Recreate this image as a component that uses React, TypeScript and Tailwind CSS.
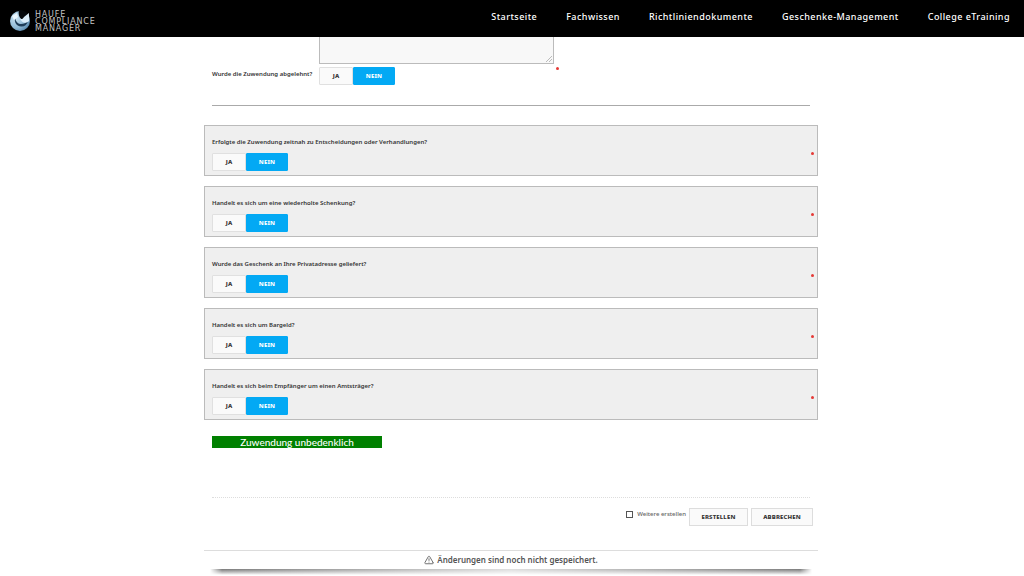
import { useState } from 'react';
import { TriangleAlert } from 'lucide-react';

const NAV_ITEMS = [
  'Startseite',
  'Fachwissen',
  'Richtliniendokumente',
  'Geschenke-Management',
  'College eTraining',
];

const QUESTIONS = [
  { id: 'timing', label: 'Erfolgte die Zuwendung zeitnah zu Entscheidungen oder Verhandlungen?' },
  { id: 'repeated', label: 'Handelt es sich um eine wiederholte Schenkung?' },
  { id: 'address', label: 'Wurde das Geschenk an Ihre Privatadresse geliefert?' },
  { id: 'cash', label: 'Handelt es sich um Bargeld?' },
  { id: 'official', label: 'Handelt es sich beim Empfänger um einen Amtsträger?' },
];

function Logo() {
  return (
    <a href="#" className="flex items-center gap-1 pt-2.5">
      <svg viewBox="0 0 22 22" className="h-[22px] w-[22px]" aria-hidden="true">
        <defs>
          <radialGradient id="globe" cx="0.3" cy="0.35" r="0.8">
            <stop offset="0" stopColor="#c9e2f2" />
            <stop offset="0.6" stopColor="#8fb9d6" />
            <stop offset="1" stopColor="#4f7fa5" />
          </radialGradient>
        </defs>
        <circle cx="11" cy="11" r="10" fill="url(#globe)" />
        <path d="M10 0 C9 4 10 7 12 9 L16 9 L20 5 C18 2 14 0 10 0 Z" fill="#05080c" />
        <path d="M6 8 C7 12 9 14 12 14 C15 14 17 13 19 11 C18 15 15 17 12 16.500 C8 16 5 13 6 8 Z" fill="#1f3d58" />
        <path d="M11 8 C12 10 14 9 15 7 L20 3 C19.500 6 21 8 20 11 C17 14 12 13 11 8 Z" fill="#dceefa" />
        <path d="M3 6 L8 3 L9 7 L5 10 Z" fill="#eaf6fd" />
      </svg>
      <span className="flex flex-col font-['DejaVu_Sans',sans-serif] text-[8px] leading-[7px] font-normal tracking-widest text-[#c4c4c4] uppercase">
        <span>Haufe</span>
        <span>Compliance</span>
        <span>Manager</span>
      </span>
    </a>
  );
}

function YesNoToggle({ label }: { label: string }) {
  const [value, setValue] = useState<'ja' | 'nein'>('nein');
  const base = 'h-[18px] rounded-[1px] border text-[6px] leading-3 font-extrabold tracking-wide';
  const active = 'border-[#03a9f4] bg-[#03a9f4] text-white';
  const inactive = 'border-[#e0e0e0] bg-[#fafafa] text-[#333]';

  return (
    <div role="group" aria-label={label} className="flex">
      <button
        type="button"
        aria-pressed={value === 'ja'}
        onClick={() => setValue('ja')}
        className={`${base} w-[34px] ${value === 'ja' ? active : inactive}`}
      >
        JA
      </button>
      <button
        type="button"
        aria-pressed={value === 'nein'}
        onClick={() => setValue('nein')}
        className={`${base} w-[42px] ${value === 'nein' ? active : inactive}`}
      >
        NEIN
      </button>
    </div>
  );
}

function Required() {
  return <span className="h-[3px] w-[3px] shrink-0 rounded-full bg-[#e53935]" />;
}

export default function App() {
  const [createMore, setCreateMore] = useState(false);

  return (
    <div className="min-h-screen bg-white font-['Noto_Sans',sans-serif] text-[6px] leading-3 font-semibold text-[#333]">
      <header className="fixed inset-x-0 top-0 z-10 flex h-[37px] items-start justify-between bg-black pr-3.5 pl-[9px]">
        <Logo />
        <nav className="flex gap-[29px] pt-[11px] text-[9px] font-medium tracking-wider text-white">
          {NAV_ITEMS.map((item) => (
            <a key={item} href="#">
              {item}
            </a>
          ))}
        </nav>
      </header>

      <main className="pr-0.5">
        <form className="mx-auto max-w-[614px] pt-4" onSubmit={(e) => e.preventDefault()}>
          <div className="px-2">
            <div className="pl-[107px]">
              <div className="relative w-[235px]">
                <textarea
                  aria-label="Beschreibung"
                  className="block h-12 w-full resize-none border border-[#bbb] bg-[#f8f8f8] p-1 outline-none"
                />
                <svg viewBox="0 0 6 6" className="absolute right-0.5 bottom-0.5 h-1.5 w-1.5" aria-hidden="true">
                  <path d="M0 6 L6 0 M3 6 L6 3" stroke="#bbb" fill="none" />
                </svg>
              </div>
            </div>
            <div className="flex items-start pt-[3px]">
              <span className="w-[107px] pt-px">Wurde die Zuwendung abgelehnt?</span>
              <div className="flex w-[240px] justify-between">
                <YesNoToggle label="Wurde die Zuwendung abgelehnt?" />
                <Required />
              </div>
            </div>
            <hr className="mt-5 border-[#aaa]" />
          </div>

          <div className="mt-[19px] space-y-2.5">
            {QUESTIONS.map((q) => (
              <section
                key={q.id}
                className="flex items-center justify-between border border-[#bbb] bg-[#efefef] pt-2.5 pr-[3px] pb-1 pl-[7px]"
              >
                <div className="space-y-[5px]">
                  <p>{q.label}</p>
                  <YesNoToggle label={q.label} />
                </div>
                <Required />
              </section>
            ))}
          </div>

          <div className="px-2 pt-4">
            <p className="w-[170px] bg-[#008000] text-center font-[Lato,sans-serif] text-[10px] font-medium text-white">
              Zuwendung unbedenklich
            </p>
          </div>

          <div className="mx-2 mt-[49px] border-t border-dotted border-[#ddd]" />

          <div className="flex justify-end gap-[3px] pt-2.5 pr-[5px]">
            <label className="flex h-3 items-center gap-1 font-medium text-[#666]">
              <input
                type="checkbox"
                checked={createMore}
                onChange={(e) => setCreateMore(e.target.checked)}
                className="h-[7px] w-[7px] appearance-none border border-[#555] checked:bg-[#03a9f4]"
              />
              Weitere erstellen
            </label>
            <button
              type="submit"
              className="h-[18px] w-[59px] border border-[#ddd] bg-[#fafafa] font-extrabold tracking-wide text-[#333]"
            >
              ERSTELLEN
            </button>
            <button
              type="button"
              className="h-[18px] w-[62px] border border-[#ddd] bg-[#fafafa] font-extrabold tracking-wide text-[#333]"
            >
              ABBRECHEN
            </button>
          </div>

          <div className="mt-6 border-t border-[#ddd]">
            <p className="flex items-center justify-center gap-[3px] py-[3px] text-[8px] text-[#555]">
              <TriangleAlert className="h-2.5 w-2.5" />
              Änderungen sind noch nicht gespeichert.
            </p>
            <div className="mx-1.5 h-1.5 bg-linear-to-b from-[#777] to-white mask-[linear-gradient(to_right,transparent,black_2%,rgb(0_0_0/0.25)_50%,black_98%,transparent)]" />
          </div>
        </form>
      </main>
    </div>
  );
}
